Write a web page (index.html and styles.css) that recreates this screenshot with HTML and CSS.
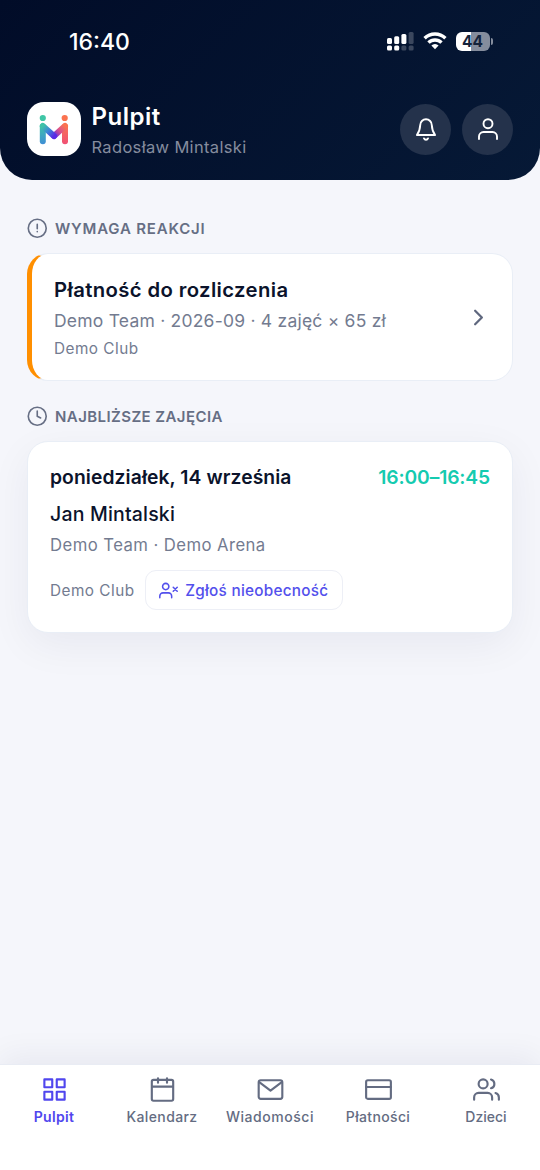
FILE: index.html
```html
<!DOCTYPE html>
<html lang="pl">
<head>
<meta charset="utf-8">
<title>Pulpit</title>
<link rel="stylesheet" href="styles.css">
</head>
<body>
<div class="app">
  <header class="header">
    <div class="status">
      <span class="clock">16:40</span>
      <div class="indicators">
        <svg class="signal" width="28" height="19" viewBox="0 0 28 19" fill="#fff">
          <rect x="0" y="6" width="5" height="6" rx="1.5"/><rect x="7.2" y="4.2" width="5" height="7.8" rx="1.5"/><rect x="14.4" y="2" width="5" height="10" rx="1.5"/><rect x="21.6" y="0" width="5" height="12" rx="1.5" opacity=".22"/>
          <rect x="0" y="13.5" width="5" height="5" rx="1.5"/><rect x="7.2" y="13.5" width="5" height="5" rx="1.5"/><rect x="14.4" y="13.5" width="5" height="5" rx="1.5" opacity=".22"/><rect x="21.6" y="13.5" width="5" height="5" rx="1.5" opacity=".22"/>
        </svg>
        <svg class="wifi" width="24" height="18" viewBox="0 0 24 18" fill="none" stroke="#fff" stroke-width="3.4">
          <path d="M1.6 6.2a14.8 14.8 0 0 1 20.8 0"/><path d="M5.5 10.6a9.3 9.3 0 0 1 13 0"/><path d="M12 17.2l-3.6-3.6a5 5 0 0 1 7.2 0z" fill="#fff" stroke="none"/>
        </svg>
        <div class="battery"><span class="battery-text">44</span></div>
      </div>
    </div>
    <div class="bar">
      <div class="logo">
        <svg width="54" height="54" viewBox="0 0 54 54">
          <defs>
            <linearGradient id="left" gradientUnits="userSpaceOnUse" x1="14" y1="22" x2="20" y2="44"><stop offset="0" stop-color="#3fc6a6"/><stop offset="1" stop-color="#3f86dc"/></linearGradient>
            <linearGradient id="right" gradientUnits="userSpaceOnUse" x1="38" y1="20" x2="38" y2="44"><stop offset="0" stop-color="#fb7a50"/><stop offset="1" stop-color="#ef4c78"/></linearGradient>
            <linearGradient id="midl" gradientUnits="userSpaceOnUse" x1="16" y1="24" x2="27" y2="34"><stop offset="0" stop-color="#3fc2a8"/><stop offset=".5" stop-color="#3c86d8"/><stop offset="1" stop-color="#5a2be6"/></linearGradient>
            <linearGradient id="midr" gradientUnits="userSpaceOnUse" x1="27" y1="34" x2="38" y2="24"><stop offset="0" stop-color="#5a2be6"/><stop offset=".5" stop-color="#d8508f"/><stop offset="1" stop-color="#fb7350"/></linearGradient>
          </defs>
          <g fill="none" stroke-width="6" stroke-linecap="round">
            <path d="M15.8 24.5v14.8" stroke="url(#left)"/><path d="M38 24.5v14.8" stroke="url(#right)"/>
            <path d="M27 34l11-10" stroke="url(#midr)"/><path d="M15.8 24l11.2 10" stroke="url(#midl)"/>
          </g>
          <circle cx="15.8" cy="16" r="3.1" fill="#3fc6a6"/><circle cx="37.7" cy="16" r="3.1" fill="#fb7350"/>
        </svg>
      </div>
      <div class="heading">
        <h1 class="title">Pulpit</h1>
        <p class="subtitle">Radosław Mintalski</p>
      </div>
      <div class="round"><svg class="icon" width="26" height="26" viewBox="0 0 26 26"><path d="M7.2 9.2C7.2 5.8 9.8 3.3 13 3.3s5.8 2.500 5.800 5.900c.2 4.300 1.200 7 3.300 9.800H3.900c2.100-2.800 3.100-5.500 3.300-9.800z"/><path d="M15 22.400a2.200 2.200 0 0 1-4 0"/></svg></div>
      <div class="round"><svg class="icon" width="26" height="26" viewBox="0 0 26 26"><path d="M22 23v-2.500a4.500 4.500 0 0 0-4.500-4.500h-9A4.500 4.500 0 0 0 4 20.500V23"/><circle cx="13" cy="7.700" r="4.500"/></svg></div>
    </div>
  </header>
  <main class="content">
    <h2 class="section"><svg class="icon" width="20.5" height="20.5" viewBox="0 0 24 24"><circle cx="12" cy="12" r="10.5"/><path d="M12 7.5v5M12 16h.01"/></svg><span class="section-a">WYMAGA REAKCJI</span></h2>
    <section class="card alert">
      <div class="alert-body">
        <h3><span class="pay-title">Płatność do rozliczenia</span></h3>
        <p class="pay-info"><span class="pay-text">Demo Team · 2026-09 · 4 zajęć × 65 zł</span></p>
        <p class="pay-club"><span class="club">Demo Club</span></p>
      </div>
      <svg class="icon chevron" width="27" height="27" viewBox="0 0 24 24"><path d="M9 18l6-6-6-6"/></svg>
    </section>
    <h2 class="section second"><svg class="icon" width="20.5" height="20.5" viewBox="0 0 24 24"><circle cx="12" cy="12" r="10.5"/><path d="M12 6v6l4 2"/></svg><span class="section-b">NAJBLIŻSZE ZAJĘCIA</span></h2>
    <section class="card lesson">
      <div class="when"><span class="day">poniedziałek, 14 września</span><span class="hours">16:00–16:45</span></div>
      <p class="who"><span class="name">Jan Mintalski</span></p>
      <p class="where"><span class="place">Demo Team · Demo Arena</span></p>
      <div class="actions"><span class="club">Demo Club</span>
        <div class="absence"><svg class="icon" width="19" height="19" viewBox="0 0 24 24"><path d="M16 21v-2a4 4 0 0 0-4-4H5a4 4 0 0 0-4 4v2"/><circle cx="8.5" cy="7" r="4"/><path d="M18 8l5 5M23 8l-5 5"/></svg><span class="absence-text">Zgłoś nieobecność</span></div>
      </div>
    </section>
  </main>
  <nav class="tabs">
    <div class="tab active"><svg class="icon" width="27" height="27" viewBox="0 0 24 24"><path d="M3 3h7v7H3zM14 3h7v7h-7zM14 14h7v7h-7zM3 14h7v7H3z"/></svg><span class="tab-1">Pulpit</span></div>
    <div class="tab"><svg class="icon" width="27" height="27" viewBox="0 0 24 24"><rect x="2.5" y="3.500" width="19" height="18.500" rx="1.500"/><path d="M16 2v4M8 2v4M3 9.500h18"/></svg><span class="tab-2">Kalendarz</span></div>
    <div class="tab"><svg class="icon" width="27" height="27" viewBox="0 0 24 24"><rect x="1.500" y="3.800" width="21" height="16.500" rx="1.800"/><path d="M22 5.500L12 13 2 5.500"/></svg><span class="tab-3">Wiadomości</span></div>
    <div class="tab"><svg class="icon" width="27" height="27" viewBox="0 0 24 24"><rect x="1" y="3.800" width="22" height="16.500" rx="1.500"/><path d="M1 9.800h22"/></svg><span class="tab-4">Płatności</span></div>
    <div class="tab"><svg class="icon" width="27" height="27" viewBox="0 0 24 24"><path d="M17 21v-2a4 4 0 0 0-4-4H5a4 4 0 0 0-4 4v2"/><circle cx="9" cy="7" r="4"/><path d="M23 21v-2a4 4 0 0 0-3-3.87M16 3.13a4 4 0 0 1 0 7.75"/></svg><span class="tab-5">Dzieci</span></div>
  </nav>
</div>
</body>
</html>
```
FILE: styles.css
```css
* { box-sizing: border-box; margin: 0; padding: 0; }
body { font-family: Inter, "Open Sans", sans-serif; background: #f5f6fb; color: #0b132b; }
span { white-space: nowrap; }
.icon { display: block; flex: none; fill: none; stroke: currentColor; stroke-width: 1.9; stroke-linecap: round; stroke-linejoin: round; }
.app { height: 1170px; display: flex; flex-direction: column; overflow: hidden; }

.header { flex: none; height: 180px; border-radius: 0 0 32px 32px; background: linear-gradient(135deg, #010c28, #061936); color: #fff; }
.status { height: 82px; padding: 0 50.5px 0 69px; display: flex; align-items: center; justify-content: space-between; }
.clock { padding-top: 1px; font-size: 23px; font-weight: 500; }
.indicators { display: flex; align-items: center; }
.wifi { margin: 0 9px 0 7.5px; }
.battery { position: relative; width: 34px; height: 19px; border-radius: 6px; background: linear-gradient(90deg, #fff 44%, #858d9d 44%); display: flex; align-items: center; justify-content: center; }
.battery::after { content: ""; position: absolute; left: 35px; top: 6px; width: 2px; height: 7px; border-radius: 0 2px 2px 0; background: #858d9d; }
.battery-text { font-size: 15.5px; font-weight: 700; line-height: 19px; color: #14233c; }
.bar { display: flex; align-items: center; padding: 20px 27px 0; height: 74px; }
.logo { width: 54px; height: 54px; border-radius: 17px; background: #fff; }
.heading { flex: 1; padding: 5px 0 0 10.5px; }
.title { font-size: 24px; font-weight: 600; line-height: 30px; letter-spacing: .5px; }
.subtitle { font-size: 16.5px; line-height: 30px; letter-spacing: .33px; color: #858c9e; }
.round { width: 51px; height: 51px; border-radius: 50%; background: #24324b; display: flex; align-items: center; justify-content: center; }
.round + .round { margin-left: 11px; }

.content { flex: 1; padding: 36px 27px 0; }
.section { height: 25px; display: flex; align-items: center; gap: 7.5px; color: #666e84; font-size: 15px; font-weight: 600; }
.section-a { letter-spacing: .8px; }
.section-b { letter-spacing: .42px; }
.second { margin-top: 23px; }
.card { background: #fff; border: 1.5px solid #e9eef6; border-radius: 21px; }
.alert { margin-top: 12px; height: 128px; padding: 0 20.5px 0 22px; border-left: 5px solid #ff8f00; display: flex; align-items: center; justify-content: space-between; color: #5f677e; }
.alert-body { display: flex; flex-direction: column; }
.chevron { stroke-width: 2; }
h3 { font-size: 20.3px; line-height: 30px; font-weight: 600; color: #0b132b; }
.pay-title { letter-spacing: .38px; }
.pay-info { font-size: 17.5px; line-height: 32px; color: #737b90; }
.pay-text { letter-spacing: .22px; }
.pay-club { line-height: 22px; }
.club { font-size: 15.3px; letter-spacing: .5px; color: #737b90; }
.lesson { margin-top: 12px; height: 192px; padding: 18px 22px 0; box-shadow: 0 12px 42px rgba(15, 23, 60, .06); }
.when { height: 34px; display: flex; align-items: center; justify-content: space-between; font-size: 19.3px; font-weight: 600; }
.day { letter-spacing: .09px; }
.hours { letter-spacing: -.15px; color: #15cbb0; }
.who { font-size: 19.5px; font-weight: 500; line-height: 41px; }
.name { letter-spacing: .18px; }
.where { font-size: 16.7px; line-height: 21px; color: #737b90; }
.place { letter-spacing: .43px; }
.actions { display: flex; align-items: center; margin-top: 14px; }
.absence { margin-left: 10.5px; width: 198px; height: 40px; padding-left: 13px; border: 1.5px solid #edeff6; border-radius: 11px; display: flex; align-items: center; gap: 7px; color: #5350ec; font-size: 15.3px; font-weight: 500; }
.absence-text { letter-spacing: .27px; }

.tabs { flex: none; height: 106px; padding-top: 11px; background: #fff; border-top: 1px solid #e9ecf4; box-shadow: 0 -8px 30px rgba(15, 23, 60, .06); display: grid; grid-template-columns: repeat(5, 1fr); color: #646c82; }
.tab { display: flex; flex-direction: column; align-items: center; font-size: 14px; font-weight: 500; line-height: 28px; }
.active { color: #5046ee; font-weight: 600; }
.tab-1 { letter-spacing: .3px; }
.tab-2 { letter-spacing: .38px; }
.tab-3 { letter-spacing: .55px; }
.tab-4 { letter-spacing: .35px; }
```
